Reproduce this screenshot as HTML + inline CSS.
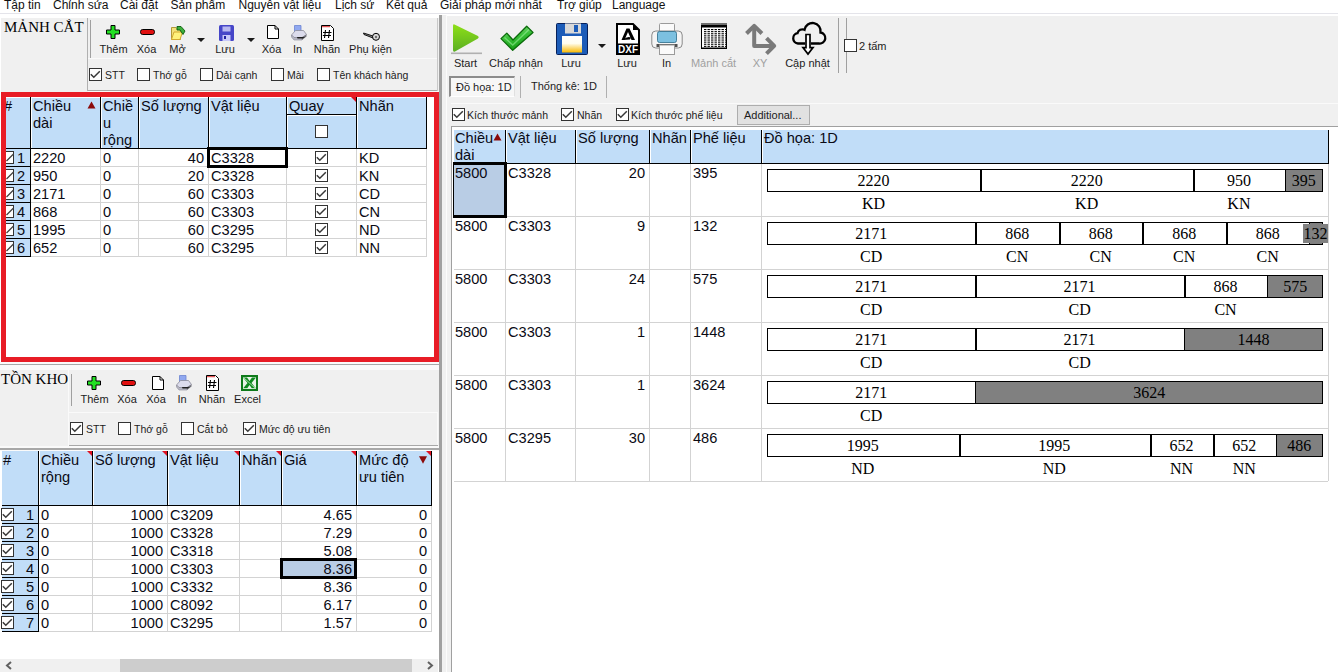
<!DOCTYPE html><html><head><meta charset="utf-8"><style>
*{box-sizing:border-box;margin:0;padding:0}
html,body{width:1338px;height:672px;overflow:hidden;background:#fff;position:relative;font-family:"Liberation Sans",sans-serif;color:#000}
.a{position:absolute}
.t{position:absolute;white-space:nowrap;line-height:1}
.menu{font-size:12px;color:#111}
.serif{font-family:"Liberation Serif",serif}
.lbl{position:absolute;white-space:nowrap;line-height:1;font-size:11px;color:#1c1c1c;text-align:center}
.cb{position:absolute;width:13px;height:13px;border:1px solid #333;background:#fff}
.ck{position:absolute;left:0;top:0}
.g{position:absolute;white-space:nowrap;line-height:1;font-size:14.6px;color:#0a0a14}
.gr{position:absolute;white-space:nowrap;line-height:1;font-size:14.6px;text-align:right;color:#0a0a14}
.b{position:absolute;white-space:nowrap;line-height:1;font-family:"Liberation Serif",serif;font-size:16px;text-align:center;color:#000}
</style></head><body>
<div class="t menu" style="left:4px;top:-1.5px;">Tập tin</div>
<div class="t menu" style="left:53px;top:-1.5px;">Chỉnh sửa</div>
<div class="t menu" style="left:120px;top:-1.5px;">Cài đặt</div>
<div class="t menu" style="left:170.5px;top:-1.5px;">Sản phẩm</div>
<div class="t menu" style="left:238.5px;top:-1.5px;">Nguyên vật liệu</div>
<div class="t menu" style="left:335px;top:-1.5px;">Lịch sử</div>
<div class="t menu" style="left:386px;top:-1.5px;">Kết quả</div>
<div class="t menu" style="left:440px;top:-1.5px;">Giải pháp mới nhất</div>
<div class="t menu" style="left:557px;top:-1.5px;">Trợ giúp</div>
<div class="t menu" style="left:612px;top:-1.5px;">Language</div>
<div class="a" style="left:0px;top:13px;width:1338px;height:1px;background:#e4e4ea"></div>
<div class="a" style="left:439px;top:15px;width:3px;height:657px;background:#a0a0a0"></div>
<div class="a" style="left:442px;top:15px;width:5px;height:657px;background:#f0f0f0"></div>
<div class="a" style="left:446px;top:15px;width:1px;height:657px;background:#fbfbfb"></div>
<div class="a" style="left:1px;top:18px;width:438px;height:74px;background:#f0f0f0"></div>
<div class="a" style="left:87px;top:18px;width:1px;height:73px;background:#b0b0b0"></div>
<div class="t serif" style="left:4px;top:20px;font-size:15px">MẢNH CẮT</div>
<div class="a" style="left:88px;top:58px;width:350px;height:1px;background:#fafafa"></div>
<div class="a" style="left:88px;top:90px;width:350px;height:1px;background:#a8a8a8"></div>
<div class="a" style="left:88px;top:91px;width:351px;height:1px;background:#fafafa"></div>
<div class="a" style="left:437px;top:18px;width:1px;height:73px;background:#c8c8c8"></div>
<div class="a" style="left:90px;top:20px;width:1px;height:38px;background:#a0a0a0"></div>
<svg class="a" style="left:106px;top:25px" width="14" height="14" viewBox="0 0 14 14"><path d="M5 0.5 H9 V5 H13.5 V9 H9 V13.5 H5 V9 H0.5 V5 H5Z" fill="#22e022" stroke="#000" stroke-width="1" stroke-linejoin="round"/></svg>
<div class="lbl" style="left:63.5px;top:44px;width:100px;color:#1c1c1c;font-size:11px">Thêm</div>
<svg class="a" style="left:140px;top:29px" width="15" height="6" viewBox="0 0 15 6"><rect x="0.5" y="0.5" width="14" height="5" rx="2.2" fill="#e01010" stroke="#000" stroke-width="1"/></svg>
<div class="lbl" style="left:96.5px;top:44px;width:100px;color:#1c1c1c;font-size:11px">Xóa</div>
<svg class="a" style="left:170px;top:25px" width="16" height="16" viewBox="0 0 16 16"><path d="M1.5 2.5 H6 L7 3.5 H10.5 V14.5 H1.5Z" fill="#f4e27a" stroke="#b09838" stroke-width="1"/><path d="M1.5 14.5 L4 7 H12.5 L10 14.5Z" fill="#fff27a" stroke="#d4aa30" stroke-width="1"/><path d="M7 1.5 H11 L15 6 L13 9.5 L10 5 H7Z" fill="#3cb03c" stroke="#0c5a0c" stroke-width="0.9"/></svg>
<div class="lbl" style="left:127.5px;top:44px;width:100px;color:#1c1c1c;font-size:11px">Mở</div>
<svg class="a" style="left:197px;top:38px" width="8" height="4" viewBox="0 0 8 4"><path d="M0 0 H8 L4 4Z" fill="#1a1a1a"/></svg>
<svg class="a" style="left:219px;top:25px" width="15" height="16" viewBox="0 0 15 16"><rect x="0" y="0" width="15" height="16" rx="1.5" fill="#4646c8"/><rect x="3.5" y="1.5" width="8" height="5" fill="#b8b8f0"/><rect x="3.5" y="10" width="8" height="6" fill="#c8c8f8"/><rect x="5" y="11" width="2" height="3" fill="#2020a0"/></svg>
<div class="lbl" style="left:175px;top:44px;width:100px;color:#1c1c1c;font-size:11px">Lưu</div>
<svg class="a" style="left:247px;top:38px" width="8" height="4" viewBox="0 0 8 4"><path d="M0 0 H8 L4 4Z" fill="#1a1a1a"/></svg>
<svg class="a" style="left:267px;top:25px" width="12" height="14" viewBox="0 0 12 14"><path d="M0.5 0.5 H8 L11.5 4 V13.5 H0.5Z" fill="#fff" stroke="#000" stroke-width="1"/><path d="M8 0.5 V4 H11.5" fill="none" stroke="#000" stroke-width="1"/></svg>
<div class="lbl" style="left:221.5px;top:44px;width:100px;color:#1c1c1c;font-size:11px">Xóa</div>
<svg class="a" style="left:291px;top:25px" width="16" height="16" viewBox="0 0 16 16"><path d="M3.5 0.5 H10 V7 H3.5Z" fill="#90a8f0" stroke="#6c84d0" stroke-width="0.8"/><path d="M0.5 10 L4.5 5.5 H12.5 L15.5 9.5 L11 12.5 H3Z" fill="#dcdcec" stroke="#8a8a98" stroke-width="0.8"/><path d="M0.5 10 L3 12.5 H11 L11 15 H3 L0.5 12Z" fill="#b8b8c4" stroke="#8a8a98" stroke-width="0.6"/><path d="M11 12.5 L15.5 9.5 V11.5 L11 15Z" fill="#707078"/><path d="M6 12 H14 L11.5 13.6 H6.5Z" fill="#202020"/></svg>
<div class="lbl" style="left:247.5px;top:44px;width:100px;color:#1c1c1c;font-size:11px">In</div>
<svg class="a" style="left:321px;top:25px" width="13" height="16" viewBox="0 0 13 16"><path d="M0.5 0.5 H9.5 L12.5 3.5 V15.5 H0.5Z" fill="#fff" stroke="#000" stroke-width="1"/><rect x="1" y="1.2" width="8" height="1" fill="#e03030"/><path d="M4.5 5 L3.5 13 M8.5 5 L7.5 13 M2 7.5 H10.5 M1.8 10.5 H10" stroke="#000" stroke-width="1.1"/></svg>
<div class="lbl" style="left:277px;top:44px;width:100px;color:#1c1c1c;font-size:11px">Nhãn</div>
<svg class="a" style="left:363px;top:32px" width="17" height="9" viewBox="0 0 17 9"><path d="M0.5 1 L10 4 L10 6 L1 2.5Z" fill="#909090" stroke="#000" stroke-width="0.9"/><circle cx="13" cy="4.8" r="3.5" fill="#d8d8d8" stroke="#000" stroke-width="1"/><circle cx="13" cy="5" r="1.2" fill="#707070"/></svg>
<div class="lbl" style="left:320.5px;top:44px;width:100px;color:#1c1c1c;font-size:11px">Phụ kiện</div>
<div class="cb" style="left:89px;top:68px;width:13px;height:13px"><svg class="ck" width="11" height="11" viewBox="0 0 11 11"><path d="M0.8 5.2 L3.8 8.2 L9.8 2.2" fill="none" stroke="#383838" stroke-width="1.5"/></svg></div>
<div class="t" style="left:105px;top:70px;font-size:10.5px;color:#1c1c1c">STT</div>
<div class="cb" style="left:137px;top:68px;width:13px;height:13px"></div>
<div class="t" style="left:153px;top:70px;font-size:10.5px;color:#1c1c1c">Thớ gỗ</div>
<div class="cb" style="left:200px;top:68px;width:13px;height:13px"></div>
<div class="t" style="left:216px;top:70px;font-size:10.5px;color:#1c1c1c">Dải cạnh</div>
<div class="cb" style="left:271px;top:68px;width:13px;height:13px"></div>
<div class="t" style="left:287px;top:70px;font-size:10.5px;color:#1c1c1c">Mài</div>
<div class="cb" style="left:317px;top:68px;width:13px;height:13px"></div>
<div class="t" style="left:333px;top:70px;font-size:10.5px;color:#1c1c1c">Tên khách hàng</div>

<div class="a" style="left:1px;top:92px;width:438px;height:270px;background:#fff"></div>
<div class="a" style="left:6px;top:97px;width:428px;height:1px;background:#fff"></div>
<div class="a" style="left:6px;top:98px;width:420px;height:50px;background:#c1ddf8"></div>
<div class="a" style="left:30px;top:97px;width:1px;height:52px;background:#000"></div>
<div class="a" style="left:31px;top:97px;width:1px;height:51px;background:#fff"></div>
<div class="a" style="left:100px;top:97px;width:1px;height:52px;background:#000"></div>
<div class="a" style="left:101px;top:97px;width:1px;height:51px;background:#fff"></div>
<div class="a" style="left:138px;top:97px;width:1px;height:52px;background:#000"></div>
<div class="a" style="left:139px;top:97px;width:1px;height:51px;background:#fff"></div>
<div class="a" style="left:208px;top:97px;width:1px;height:52px;background:#000"></div>
<div class="a" style="left:209px;top:97px;width:1px;height:51px;background:#fff"></div>
<div class="a" style="left:286px;top:97px;width:1px;height:52px;background:#000"></div>
<div class="a" style="left:287px;top:97px;width:1px;height:51px;background:#fff"></div>
<div class="a" style="left:356px;top:97px;width:1px;height:52px;background:#000"></div>
<div class="a" style="left:357px;top:97px;width:1px;height:51px;background:#fff"></div>
<div class="a" style="left:426px;top:97px;width:1px;height:52px;background:#000"></div>
<div class="a" style="left:6px;top:148px;width:420px;height:1px;background:#000"></div>
<div class="a" style="left:287px;top:114px;width:69px;height:1px;background:#000"></div>
<div class="a" style="left:287px;top:115px;width:69px;height:1px;background:#fff"></div>
<div class="g" style="left:4px;top:99px;">#</div>
<div class="g" style="left:33px;top:99px;">Chiều</div>
<div class="g" style="left:33px;top:116px;">dài</div>
<div class="g" style="left:103px;top:99px;">Chiề</div>
<div class="g" style="left:103px;top:116px;">u</div>
<div class="g" style="left:103px;top:133px;">rộng</div>
<div class="g" style="left:141px;top:99px;">Số lượng</div>
<div class="g" style="left:211px;top:99px;">Vật liệu</div>
<div class="g" style="left:289px;top:99px;">Quay</div>
<div class="g" style="left:359px;top:99px;">Nhãn</div>
<svg class="a" style="left:87px;top:101px" width="9" height="8" viewBox="0 0 9 8"><path d="M4.5 0.5 L8.5 7.5 L0.5 7.5Z" fill="#8b0b0b"/></svg>
<div class="cb" style="left:315px;top:125px;width:13px;height:13px"></div>
<div class="a" style="left:351px;top:97px;width:0;height:0;border-top:5px solid #e01020;border-left:5px solid transparent"></div>
<div class="a" style="left:6px;top:149px;width:24px;height:17px;background:#c1ddf8"></div>
<div class="a" style="left:6px;top:166px;width:24px;height:1px;background:#000"></div>
<div class="a" style="left:30px;top:166px;width:396px;height:1px;background:#d3d3d3"></div>
<div class="a" style="left:1px;top:151px;width:13px;height:13px;border:1px solid #333;background:#fff"></div>
<svg class="a" style="left:6px;top:153px" width="8" height="9" viewBox="0 0 8 9"><path d="M0.5 8 L7.5 1" stroke="#404040" stroke-width="1.3"/></svg>
<div class="gr" style="left:0px;top:151px;width:25px">1</div>
<div class="g" style="left:33px;top:151px;">2220</div>
<div class="g" style="left:103px;top:151px;">0</div>
<div class="gr" style="left:138px;top:151px;width:66px">40</div>
<div class="g" style="left:211px;top:151px;">C3328</div>
<div class="g" style="left:359px;top:151px;">KD</div>
<div class="cb" style="left:315px;top:151px;width:13px;height:13px"><svg class="ck" width="11" height="11" viewBox="0 0 11 11"><path d="M0.8 5.2 L3.8 8.2 L9.8 2.2" fill="none" stroke="#383838" stroke-width="1.5"/></svg></div>
<div class="a" style="left:6px;top:167px;width:24px;height:17px;background:#c1ddf8"></div>
<div class="a" style="left:6px;top:184px;width:24px;height:1px;background:#000"></div>
<div class="a" style="left:30px;top:184px;width:396px;height:1px;background:#d3d3d3"></div>
<div class="a" style="left:1px;top:169px;width:13px;height:13px;border:1px solid #333;background:#fff"></div>
<svg class="a" style="left:6px;top:171px" width="8" height="9" viewBox="0 0 8 9"><path d="M0.5 8 L7.5 1" stroke="#404040" stroke-width="1.3"/></svg>
<div class="gr" style="left:0px;top:169px;width:25px">2</div>
<div class="g" style="left:33px;top:169px;">950</div>
<div class="g" style="left:103px;top:169px;">0</div>
<div class="gr" style="left:138px;top:169px;width:66px">20</div>
<div class="g" style="left:211px;top:169px;">C3328</div>
<div class="g" style="left:359px;top:169px;">KN</div>
<div class="cb" style="left:315px;top:169px;width:13px;height:13px"><svg class="ck" width="11" height="11" viewBox="0 0 11 11"><path d="M0.8 5.2 L3.8 8.2 L9.8 2.2" fill="none" stroke="#383838" stroke-width="1.5"/></svg></div>
<div class="a" style="left:6px;top:185px;width:24px;height:17px;background:#c1ddf8"></div>
<div class="a" style="left:6px;top:202px;width:24px;height:1px;background:#000"></div>
<div class="a" style="left:30px;top:202px;width:396px;height:1px;background:#d3d3d3"></div>
<div class="a" style="left:1px;top:187px;width:13px;height:13px;border:1px solid #333;background:#fff"></div>
<svg class="a" style="left:6px;top:189px" width="8" height="9" viewBox="0 0 8 9"><path d="M0.5 8 L7.5 1" stroke="#404040" stroke-width="1.3"/></svg>
<div class="gr" style="left:0px;top:187px;width:25px">3</div>
<div class="g" style="left:33px;top:187px;">2171</div>
<div class="g" style="left:103px;top:187px;">0</div>
<div class="gr" style="left:138px;top:187px;width:66px">60</div>
<div class="g" style="left:211px;top:187px;">C3303</div>
<div class="g" style="left:359px;top:187px;">CD</div>
<div class="cb" style="left:315px;top:187px;width:13px;height:13px"><svg class="ck" width="11" height="11" viewBox="0 0 11 11"><path d="M0.8 5.2 L3.8 8.2 L9.8 2.2" fill="none" stroke="#383838" stroke-width="1.5"/></svg></div>
<div class="a" style="left:6px;top:203px;width:24px;height:17px;background:#c1ddf8"></div>
<div class="a" style="left:6px;top:220px;width:24px;height:1px;background:#000"></div>
<div class="a" style="left:30px;top:220px;width:396px;height:1px;background:#d3d3d3"></div>
<div class="a" style="left:1px;top:205px;width:13px;height:13px;border:1px solid #333;background:#fff"></div>
<svg class="a" style="left:6px;top:207px" width="8" height="9" viewBox="0 0 8 9"><path d="M0.5 8 L7.5 1" stroke="#404040" stroke-width="1.3"/></svg>
<div class="gr" style="left:0px;top:205px;width:25px">4</div>
<div class="g" style="left:33px;top:205px;">868</div>
<div class="g" style="left:103px;top:205px;">0</div>
<div class="gr" style="left:138px;top:205px;width:66px">60</div>
<div class="g" style="left:211px;top:205px;">C3303</div>
<div class="g" style="left:359px;top:205px;">CN</div>
<div class="cb" style="left:315px;top:205px;width:13px;height:13px"><svg class="ck" width="11" height="11" viewBox="0 0 11 11"><path d="M0.8 5.2 L3.8 8.2 L9.8 2.2" fill="none" stroke="#383838" stroke-width="1.5"/></svg></div>
<div class="a" style="left:6px;top:221px;width:24px;height:17px;background:#c1ddf8"></div>
<div class="a" style="left:6px;top:238px;width:24px;height:1px;background:#000"></div>
<div class="a" style="left:30px;top:238px;width:396px;height:1px;background:#d3d3d3"></div>
<div class="a" style="left:1px;top:223px;width:13px;height:13px;border:1px solid #333;background:#fff"></div>
<svg class="a" style="left:6px;top:225px" width="8" height="9" viewBox="0 0 8 9"><path d="M0.5 8 L7.5 1" stroke="#404040" stroke-width="1.3"/></svg>
<div class="gr" style="left:0px;top:223px;width:25px">5</div>
<div class="g" style="left:33px;top:223px;">1995</div>
<div class="g" style="left:103px;top:223px;">0</div>
<div class="gr" style="left:138px;top:223px;width:66px">60</div>
<div class="g" style="left:211px;top:223px;">C3295</div>
<div class="g" style="left:359px;top:223px;">ND</div>
<div class="cb" style="left:315px;top:223px;width:13px;height:13px"><svg class="ck" width="11" height="11" viewBox="0 0 11 11"><path d="M0.8 5.2 L3.8 8.2 L9.8 2.2" fill="none" stroke="#383838" stroke-width="1.5"/></svg></div>
<div class="a" style="left:6px;top:239px;width:24px;height:17px;background:#c1ddf8"></div>
<div class="a" style="left:6px;top:256px;width:24px;height:1px;background:#000"></div>
<div class="a" style="left:30px;top:256px;width:396px;height:1px;background:#d3d3d3"></div>
<div class="a" style="left:1px;top:241px;width:13px;height:13px;border:1px solid #333;background:#fff"></div>
<svg class="a" style="left:6px;top:243px" width="8" height="9" viewBox="0 0 8 9"><path d="M0.5 8 L7.5 1" stroke="#404040" stroke-width="1.3"/></svg>
<div class="gr" style="left:0px;top:241px;width:25px">6</div>
<div class="g" style="left:33px;top:241px;">652</div>
<div class="g" style="left:103px;top:241px;">0</div>
<div class="gr" style="left:138px;top:241px;width:66px">60</div>
<div class="g" style="left:211px;top:241px;">C3295</div>
<div class="g" style="left:359px;top:241px;">NN</div>
<div class="cb" style="left:315px;top:241px;width:13px;height:13px"><svg class="ck" width="11" height="11" viewBox="0 0 11 11"><path d="M0.8 5.2 L3.8 8.2 L9.8 2.2" fill="none" stroke="#383838" stroke-width="1.5"/></svg></div>
<div class="a" style="left:30px;top:149px;width:1px;height:108px;background:#000"></div>
<div class="a" style="left:100px;top:149px;width:1px;height:108px;background:#d3d3d3"></div>
<div class="a" style="left:138px;top:149px;width:1px;height:108px;background:#d3d3d3"></div>
<div class="a" style="left:208px;top:149px;width:1px;height:108px;background:#d3d3d3"></div>
<div class="a" style="left:286px;top:149px;width:1px;height:108px;background:#d3d3d3"></div>
<div class="a" style="left:356px;top:149px;width:1px;height:108px;background:#d3d3d3"></div>
<div class="a" style="left:426px;top:149px;width:1px;height:108px;background:#d3d3d3"></div>
<div class="a" style="left:207px;top:147px;width:81px;height:21px;border:3px solid #000"></div>
<div class="a" style="left:1px;top:92px;width:438px;height:270px;border:5px solid #e81c26"></div>
<div class="a" style="left:0px;top:362px;width:439px;height:2px;background:#fafafa"></div>
<div class="a" style="left:0px;top:364px;width:439px;height:1px;background:#a8a8a8"></div>
<div class="a" style="left:0px;top:365px;width:439px;height:5px;background:#fafafa"></div>
<div class="a" style="left:0px;top:370px;width:439px;height:78px;background:#f0f0f0"></div>
<div class="t serif" style="left:1px;top:372px;font-size:15px">TỒN KHO</div>
<div class="a" style="left:68px;top:370px;width:1px;height:76px;background:#fafafa"></div>
<div class="a" style="left:69px;top:412px;width:368px;height:1px;background:#fafafa"></div>
<div class="a" style="left:437px;top:412px;width:1px;height:33px;background:#fafafa"></div>
<div class="a" style="left:71px;top:374px;width:1px;height:32px;background:#a0a0a0"></div>
<div class="a" style="left:69px;top:445px;width:369px;height:1px;background:#a8a8a8"></div>
<div class="a" style="left:0px;top:446px;width:439px;height:2px;background:#fafafa"></div>
<div class="a" style="left:0px;top:448px;width:439px;height:2px;background:#a8a8a8"></div>
<div class="a" style="left:0px;top:450px;width:439px;height:1px;background:#fafafa"></div>

<svg class="a" style="left:87px;top:376px" width="14" height="14" viewBox="0 0 14 14"><path d="M5 0.5 H9 V5 H13.5 V9 H9 V13.5 H5 V9 H0.5 V5 H5Z" fill="#22e022" stroke="#000" stroke-width="1" stroke-linejoin="round"/></svg>
<div class="lbl" style="left:44.5px;top:394px;width:100px;color:#1c1c1c;font-size:11px">Thêm</div>
<svg class="a" style="left:121px;top:380px" width="15" height="6" viewBox="0 0 15 6"><rect x="0.5" y="0.5" width="14" height="5" rx="2.2" fill="#e01010" stroke="#000" stroke-width="1"/></svg>
<div class="lbl" style="left:77px;top:394px;width:100px;color:#1c1c1c;font-size:11px">Xóa</div>
<svg class="a" style="left:152px;top:376px" width="12" height="14" viewBox="0 0 12 14"><path d="M0.5 0.5 H8 L11.5 4 V13.5 H0.5Z" fill="#fff" stroke="#000" stroke-width="1"/><path d="M8 0.5 V4 H11.5" fill="none" stroke="#000" stroke-width="1"/></svg>
<div class="lbl" style="left:106px;top:394px;width:100px;color:#1c1c1c;font-size:11px">Xóa</div>
<svg class="a" style="left:176px;top:375px" width="16" height="16" viewBox="0 0 16 16"><path d="M3.5 0.5 H10 V7 H3.5Z" fill="#90a8f0" stroke="#6c84d0" stroke-width="0.8"/><path d="M0.5 10 L4.5 5.5 H12.5 L15.5 9.5 L11 12.5 H3Z" fill="#dcdcec" stroke="#8a8a98" stroke-width="0.8"/><path d="M0.5 10 L3 12.5 H11 L11 15 H3 L0.5 12Z" fill="#b8b8c4" stroke="#8a8a98" stroke-width="0.6"/><path d="M11 12.5 L15.5 9.5 V11.5 L11 15Z" fill="#707078"/><path d="M6 12 H14 L11.5 13.6 H6.5Z" fill="#202020"/></svg>
<div class="lbl" style="left:132px;top:394px;width:100px;color:#1c1c1c;font-size:11px">In</div>
<svg class="a" style="left:206px;top:375px" width="13" height="16" viewBox="0 0 13 16"><path d="M0.5 0.5 H9.5 L12.5 3.5 V15.5 H0.5Z" fill="#fff" stroke="#000" stroke-width="1"/><rect x="1" y="1.2" width="8" height="1" fill="#e03030"/><path d="M4.5 5 L3.5 13 M8.5 5 L7.5 13 M2 7.5 H10.5 M1.8 10.5 H10" stroke="#000" stroke-width="1.1"/></svg>
<div class="lbl" style="left:162px;top:394px;width:100px;color:#1c1c1c;font-size:11px">Nhãn</div>
<svg class="a" style="left:241px;top:375px" width="17" height="16" viewBox="0 0 17 16"><rect x="1" y="1" width="15" height="14" fill="#e8f4e8" stroke="#0e7a1a" stroke-width="2"/><path d="M2 2.5 L6 2.5 L8.5 6 L11 2.5 H15 L10.5 8 L15 13.5 H11 L8.5 10 L6 13.5 H2 L6.5 8Z" fill="#0e8a1e"/><path d="M3 3 L14 13" stroke="#c8f0c8" stroke-width="0.8"/><path d="M2 13.5 H15" stroke="#d8f0d8" stroke-width="0.7"/></svg>
<div class="lbl" style="left:197.5px;top:394px;width:100px;color:#1c1c1c;font-size:11px">Excel</div>
<div class="cb" style="left:70px;top:422px;width:13px;height:13px"><svg class="ck" width="11" height="11" viewBox="0 0 11 11"><path d="M0.8 5.2 L3.8 8.2 L9.8 2.2" fill="none" stroke="#383838" stroke-width="1.5"/></svg></div>
<div class="t" style="left:86px;top:424px;font-size:10.5px;color:#1c1c1c">STT</div>
<div class="cb" style="left:118px;top:422px;width:13px;height:13px"></div>
<div class="t" style="left:134px;top:424px;font-size:10.5px;color:#1c1c1c">Thớ gỗ</div>
<div class="cb" style="left:181px;top:422px;width:13px;height:13px"></div>
<div class="t" style="left:197px;top:424px;font-size:10.5px;color:#1c1c1c">Cắt bỏ</div>
<div class="cb" style="left:243px;top:422px;width:13px;height:13px"><svg class="ck" width="11" height="11" viewBox="0 0 11 11"><path d="M0.8 5.2 L3.8 8.2 L9.8 2.2" fill="none" stroke="#383838" stroke-width="1.5"/></svg></div>
<div class="t" style="left:259px;top:424px;font-size:10.5px;color:#1c1c1c">Mức độ ưu tiên</div>

<div class="a" style="left:2px;top:451px;width:429px;height:54px;background:#c1ddf8"></div>
<div class="a" style="left:38px;top:451px;width:1px;height:55px;background:#000"></div>
<div class="a" style="left:39px;top:451px;width:1px;height:54px;background:#fff"></div>
<div class="a" style="left:92px;top:451px;width:1px;height:55px;background:#000"></div>
<div class="a" style="left:93px;top:451px;width:1px;height:54px;background:#fff"></div>
<div class="a" style="left:167px;top:451px;width:1px;height:55px;background:#000"></div>
<div class="a" style="left:168px;top:451px;width:1px;height:54px;background:#fff"></div>
<div class="a" style="left:239px;top:451px;width:1px;height:55px;background:#000"></div>
<div class="a" style="left:240px;top:451px;width:1px;height:54px;background:#fff"></div>
<div class="a" style="left:281px;top:451px;width:1px;height:55px;background:#000"></div>
<div class="a" style="left:282px;top:451px;width:1px;height:54px;background:#fff"></div>
<div class="a" style="left:356px;top:451px;width:1px;height:55px;background:#000"></div>
<div class="a" style="left:357px;top:451px;width:1px;height:54px;background:#fff"></div>
<div class="a" style="left:431px;top:451px;width:1px;height:55px;background:#000"></div>
<div class="a" style="left:2px;top:505px;width:429px;height:1px;background:#000"></div>
<div class="g" style="left:3px;top:453px;">#</div>
<div class="g" style="left:41px;top:453px;">Chiều</div>
<div class="g" style="left:41px;top:470px;">rộng</div>
<div class="g" style="left:95px;top:453px;">Số lượng</div>
<div class="g" style="left:170px;top:453px;">Vật liệu</div>
<div class="g" style="left:242px;top:453px;">Nhãn</div>
<div class="g" style="left:284px;top:453px;">Giá</div>
<div class="g" style="left:359px;top:453px;">Mức độ</div>
<div class="g" style="left:359px;top:470px;">ưu tiên</div>
<div class="a" style="left:87px;top:451px;width:0;height:0;border-top:5px solid #e01020;border-left:5px solid transparent"></div>
<div class="a" style="left:162px;top:451px;width:0;height:0;border-top:5px solid #e01020;border-left:5px solid transparent"></div>
<div class="a" style="left:234px;top:451px;width:0;height:0;border-top:5px solid #e01020;border-left:5px solid transparent"></div>
<div class="a" style="left:276px;top:451px;width:0;height:0;border-top:5px solid #e01020;border-left:5px solid transparent"></div>
<div class="a" style="left:351px;top:451px;width:0;height:0;border-top:5px solid #e01020;border-left:5px solid transparent"></div>
<div class="a" style="left:426px;top:451px;width:0;height:0;border-top:5px solid #e01020;border-left:5px solid transparent"></div>
<svg class="a" style="left:419px;top:456px" width="8" height="8" viewBox="0 0 8 8"><path d="M0 0.3 L8 0.3 L4 7.8Z" fill="#8b0b0b"/></svg>
<div class="a" style="left:2px;top:506px;width:36px;height:17px;background:#c1ddf8"></div>
<div class="a" style="left:2px;top:523px;width:36px;height:1px;background:#000"></div>
<div class="a" style="left:38px;top:523px;width:393px;height:1px;background:#d3d3d3"></div>
<div class="cb" style="left:1px;top:508px;width:13px;height:13px"><svg class="ck" width="11" height="11" viewBox="0 0 11 11"><path d="M0.8 5.2 L3.8 8.2 L9.8 2.2" fill="none" stroke="#383838" stroke-width="1.5"/></svg></div>
<div class="gr" style="left:0px;top:508px;width:34px">1</div>
<div class="g" style="left:41px;top:508px;">0</div>
<div class="gr" style="left:92px;top:508px;width:71px">1000</div>
<div class="g" style="left:170px;top:508px;">C3209</div>
<div class="gr" style="left:281px;top:508px;width:71px">4.65</div>
<div class="gr" style="left:356px;top:508px;width:71px">0</div>
<div class="a" style="left:2px;top:524px;width:36px;height:17px;background:#c1ddf8"></div>
<div class="a" style="left:2px;top:541px;width:36px;height:1px;background:#000"></div>
<div class="a" style="left:38px;top:541px;width:393px;height:1px;background:#d3d3d3"></div>
<div class="cb" style="left:1px;top:526px;width:13px;height:13px"><svg class="ck" width="11" height="11" viewBox="0 0 11 11"><path d="M0.8 5.2 L3.8 8.2 L9.8 2.2" fill="none" stroke="#383838" stroke-width="1.5"/></svg></div>
<div class="gr" style="left:0px;top:526px;width:34px">2</div>
<div class="g" style="left:41px;top:526px;">0</div>
<div class="gr" style="left:92px;top:526px;width:71px">1000</div>
<div class="g" style="left:170px;top:526px;">C3328</div>
<div class="gr" style="left:281px;top:526px;width:71px">7.29</div>
<div class="gr" style="left:356px;top:526px;width:71px">0</div>
<div class="a" style="left:2px;top:542px;width:36px;height:17px;background:#c1ddf8"></div>
<div class="a" style="left:2px;top:559px;width:36px;height:1px;background:#000"></div>
<div class="a" style="left:38px;top:559px;width:393px;height:1px;background:#d3d3d3"></div>
<div class="cb" style="left:1px;top:544px;width:13px;height:13px"><svg class="ck" width="11" height="11" viewBox="0 0 11 11"><path d="M0.8 5.2 L3.8 8.2 L9.8 2.2" fill="none" stroke="#383838" stroke-width="1.5"/></svg></div>
<div class="gr" style="left:0px;top:544px;width:34px">3</div>
<div class="g" style="left:41px;top:544px;">0</div>
<div class="gr" style="left:92px;top:544px;width:71px">1000</div>
<div class="g" style="left:170px;top:544px;">C3318</div>
<div class="gr" style="left:281px;top:544px;width:71px">5.08</div>
<div class="gr" style="left:356px;top:544px;width:71px">0</div>
<div class="a" style="left:2px;top:560px;width:36px;height:17px;background:#c1ddf8"></div>
<div class="a" style="left:2px;top:577px;width:36px;height:1px;background:#000"></div>
<div class="a" style="left:38px;top:577px;width:393px;height:1px;background:#d3d3d3"></div>
<div class="cb" style="left:1px;top:562px;width:13px;height:13px"><svg class="ck" width="11" height="11" viewBox="0 0 11 11"><path d="M0.8 5.2 L3.8 8.2 L9.8 2.2" fill="none" stroke="#383838" stroke-width="1.5"/></svg></div>
<div class="a" style="left:281px;top:559px;width:76px;height:20px;background:#b9cde5"></div>
<div class="gr" style="left:0px;top:562px;width:34px">4</div>
<div class="g" style="left:41px;top:562px;">0</div>
<div class="gr" style="left:92px;top:562px;width:71px">1000</div>
<div class="g" style="left:170px;top:562px;">C3303</div>
<div class="gr" style="left:281px;top:562px;width:71px">8.36</div>
<div class="gr" style="left:356px;top:562px;width:71px">0</div>
<div class="a" style="left:2px;top:578px;width:36px;height:17px;background:#c1ddf8"></div>
<div class="a" style="left:2px;top:595px;width:36px;height:1px;background:#000"></div>
<div class="a" style="left:38px;top:595px;width:393px;height:1px;background:#d3d3d3"></div>
<div class="cb" style="left:1px;top:580px;width:13px;height:13px"><svg class="ck" width="11" height="11" viewBox="0 0 11 11"><path d="M0.8 5.2 L3.8 8.2 L9.8 2.2" fill="none" stroke="#383838" stroke-width="1.5"/></svg></div>
<div class="gr" style="left:0px;top:580px;width:34px">5</div>
<div class="g" style="left:41px;top:580px;">0</div>
<div class="gr" style="left:92px;top:580px;width:71px">1000</div>
<div class="g" style="left:170px;top:580px;">C3332</div>
<div class="gr" style="left:281px;top:580px;width:71px">8.36</div>
<div class="gr" style="left:356px;top:580px;width:71px">0</div>
<div class="a" style="left:2px;top:596px;width:36px;height:17px;background:#c1ddf8"></div>
<div class="a" style="left:2px;top:613px;width:36px;height:1px;background:#000"></div>
<div class="a" style="left:38px;top:613px;width:393px;height:1px;background:#d3d3d3"></div>
<div class="cb" style="left:1px;top:598px;width:13px;height:13px"><svg class="ck" width="11" height="11" viewBox="0 0 11 11"><path d="M0.8 5.2 L3.8 8.2 L9.8 2.2" fill="none" stroke="#383838" stroke-width="1.5"/></svg></div>
<div class="gr" style="left:0px;top:598px;width:34px">6</div>
<div class="g" style="left:41px;top:598px;">0</div>
<div class="gr" style="left:92px;top:598px;width:71px">1000</div>
<div class="g" style="left:170px;top:598px;">C8092</div>
<div class="gr" style="left:281px;top:598px;width:71px">6.17</div>
<div class="gr" style="left:356px;top:598px;width:71px">0</div>
<div class="a" style="left:2px;top:614px;width:36px;height:17px;background:#c1ddf8"></div>
<div class="a" style="left:2px;top:631px;width:36px;height:1px;background:#000"></div>
<div class="a" style="left:38px;top:631px;width:393px;height:1px;background:#d3d3d3"></div>
<div class="cb" style="left:1px;top:616px;width:13px;height:13px"><svg class="ck" width="11" height="11" viewBox="0 0 11 11"><path d="M0.8 5.2 L3.8 8.2 L9.8 2.2" fill="none" stroke="#383838" stroke-width="1.5"/></svg></div>
<div class="gr" style="left:0px;top:616px;width:34px">7</div>
<div class="g" style="left:41px;top:616px;">0</div>
<div class="gr" style="left:92px;top:616px;width:71px">1000</div>
<div class="g" style="left:170px;top:616px;">C3295</div>
<div class="gr" style="left:281px;top:616px;width:71px">1.57</div>
<div class="gr" style="left:356px;top:616px;width:71px">0</div>
<div class="a" style="left:38px;top:506px;width:1px;height:126px;background:#000"></div>
<div class="a" style="left:92px;top:506px;width:1px;height:126px;background:#d3d3d3"></div>
<div class="a" style="left:167px;top:506px;width:1px;height:126px;background:#d3d3d3"></div>
<div class="a" style="left:239px;top:506px;width:1px;height:126px;background:#d3d3d3"></div>
<div class="a" style="left:281px;top:506px;width:1px;height:126px;background:#d3d3d3"></div>
<div class="a" style="left:356px;top:506px;width:1px;height:126px;background:#d3d3d3"></div>
<div class="a" style="left:431px;top:506px;width:1px;height:126px;background:#d3d3d3"></div>
<div class="a" style="left:280px;top:558px;width:77px;height:21px;border:3px solid #000"></div>
<div class="a" style="left:0px;top:659px;width:438px;height:13px;background:#f0f0f0"></div>
<div class="a" style="left:120px;top:659px;width:292px;height:13px;background:#cdcdcd"></div>
<svg class="a" style="left:5px;top:661px" width="8" height="9" viewBox="0 0 8 9"><path d="M6 1 L2 4.5 L6 8" fill="none" stroke="#606060" stroke-width="2"/></svg>
<svg class="a" style="left:426px;top:661px" width="8" height="9" viewBox="0 0 8 9"><path d="M2 1 L6 4.5 L2 8" fill="none" stroke="#606060" stroke-width="2"/></svg>
<div class="a" style="left:447px;top:16px;width:891px;height:111px;background:#f0f0f0"></div>
<div class="a" style="left:447px;top:127px;width:4px;height:545px;background:#f0f0f0"></div>

<svg class="a" style="left:451px;top:22px" width="31" height="33" viewBox="0 0 31 33"><defs><linearGradient id="gs" x1="0" y1="0" x2="0" y2="1"><stop offset="0" stop-color="#8ee018"/><stop offset="1" stop-color="#5aae22"/></linearGradient></defs><path d="M3.5 2.5 Q2 1.5 2 4 V28 Q2 30.5 4 29.5 L27 16.5 Q28.5 15 27 14Z" fill="url(#gs)"/><rect x="0" y="30.5" width="31" height="1.6" fill="#b0b0b0"/></svg>
<div class="lbl" style="left:415.5px;top:58px;width:100px;color:#1c1c1c;font-size:11px">Start</div>
<svg class="a" style="left:500px;top:24px" width="35" height="28" viewBox="0 0 35 28"><defs><linearGradient id="gc" x1="0" y1="0" x2="0.3" y2="1"><stop offset="0" stop-color="#90e088"/><stop offset="0.5" stop-color="#38c038"/><stop offset="1" stop-color="#18a018"/></linearGradient></defs><path d="M1 14.6 L6.8 9.1 L13 16 L26.7 2.3 L33 8.4 L12.7 26.3 Z" fill="url(#gc)" stroke="#0a6a0a" stroke-width="1.3" stroke-linejoin="round"/><path d="M4.5 13.5 L12.8 21 L29 5.5" fill="none" stroke="#a0f0a0" stroke-width="1.5" opacity="0.55"/></svg>
<div class="lbl" style="left:466px;top:58px;width:100px;color:#1c1c1c;font-size:11px">Chấp nhận</div>
<svg class="a" style="left:556px;top:23px" width="32" height="32" viewBox="0 0 32 32"><defs><linearGradient id="gy" x1="0" y1="0" x2="0" y2="1"><stop offset="0" stop-color="#fff"/><stop offset="0.45" stop-color="#fffef0"/><stop offset="1" stop-color="#f8b800"/></linearGradient></defs><rect x="0.5" y="0.5" width="31" height="31" rx="1" fill="#1c5cb8" stroke="#06205a" stroke-width="1"/><rect x="9" y="0.5" width="16" height="10" fill="#d8d8d8"/><rect x="18" y="2" width="4" height="7" fill="#1c5cb8"/><rect x="6" y="13" width="20" height="16.5" fill="url(#gy)"/></svg>
<svg class="a" style="left:598px;top:44px" width="8" height="4" viewBox="0 0 8 4"><path d="M0 0 H8 L4 4Z" fill="#1a1a1a"/></svg>
<div class="lbl" style="left:521px;top:58px;width:100px;color:#1c1c1c;font-size:11px">Lưu</div>
<svg class="a" style="left:616px;top:23px" width="24" height="32" viewBox="0 0 24 32"><path d="M1 1 H17 L23 7 V31 H1Z" fill="#fff" stroke="#000" stroke-width="2"/><path d="M17 1 V7 H23Z" fill="#000"/><path d="M5.5 17 L10.5 5.5 H13.5 L19 17 H15.5 L12 9 L8.5 17Z" fill="#000"/><path d="M7 17 Q11 13 15 14.5 L14 16.5Z" fill="#000"/><rect x="0" y="20.5" width="24" height="11.5" fill="#000"/><text x="12" y="30.3" font-family="Liberation Sans" font-weight="bold" font-size="10" fill="#fff" text-anchor="middle">DXF</text></svg>
<div class="lbl" style="left:577px;top:58px;width:100px;color:#1c1c1c;font-size:11px">Lưu</div>
<svg class="a" style="left:651px;top:22px" width="32" height="33" viewBox="0 0 32 33"><rect x="8.5" y="1.5" width="15" height="9" rx="1" fill="#fafafa" stroke="#9a9a9a"/><rect x="0.8" y="9" width="30.4" height="17" rx="4" fill="#f4f4f4" stroke="#8a8a8a" stroke-width="1"/><rect x="6.5" y="9.5" width="19" height="11" rx="2" fill="#7cc0e0" stroke="#2a6a88" stroke-width="0.8"/><rect x="5.5" y="22" width="21" height="3" fill="#505050"/><rect x="8.5" y="23" width="15" height="9.5" fill="#fafafa" stroke="#9a9a9a"/></svg>
<div class="lbl" style="left:616.5px;top:58px;width:100px;color:#1c1c1c;font-size:11px">In</div>
<svg class="a" style="left:701px;top:23px" width="26" height="26" viewBox="0 0 26 26"><rect x="0.5" y="0.5" width="25" height="25" fill="#fff" stroke="#000" stroke-width="1"/><rect x="0" y="0" width="26" height="2" fill="#707070"/><rect x="0" y="2" width="26" height="2.5" fill="#000"/><rect x="3.0" y="6.0" width="2.4" height="1.1" fill="#000"/><rect x="6.5" y="6.0" width="2.4" height="1.1" fill="#000"/><rect x="10.0" y="6.0" width="2.4" height="1.1" fill="#000"/><rect x="13.5" y="6.0" width="2.4" height="1.1" fill="#000"/><rect x="17.0" y="6.0" width="2.4" height="1.1" fill="#000"/><rect x="20.5" y="6.0" width="2.4" height="1.1" fill="#000"/><rect x="24.0" y="6.0" width="2.4" height="1.1" fill="#000"/><rect x="3.0" y="8.1" width="2.4" height="1.1" fill="#000"/><rect x="6.5" y="8.1" width="2.4" height="1.1" fill="#000"/><rect x="10.0" y="8.1" width="2.4" height="1.1" fill="#000"/><rect x="13.5" y="8.1" width="2.4" height="1.1" fill="#000"/><rect x="17.0" y="8.1" width="2.4" height="1.1" fill="#000"/><rect x="20.5" y="8.1" width="2.4" height="1.1" fill="#000"/><rect x="24.0" y="8.1" width="2.4" height="1.1" fill="#000"/><rect x="3.0" y="10.2" width="2.4" height="1.1" fill="#000"/><rect x="6.5" y="10.2" width="2.4" height="1.1" fill="#000"/><rect x="10.0" y="10.2" width="2.4" height="1.1" fill="#000"/><rect x="13.5" y="10.2" width="2.4" height="1.1" fill="#000"/><rect x="17.0" y="10.2" width="2.4" height="1.1" fill="#000"/><rect x="20.5" y="10.2" width="2.4" height="1.1" fill="#000"/><rect x="24.0" y="10.2" width="2.4" height="1.1" fill="#000"/><rect x="3.0" y="12.3" width="2.4" height="1.1" fill="#000"/><rect x="6.5" y="12.3" width="2.4" height="1.1" fill="#000"/><rect x="10.0" y="12.3" width="2.4" height="1.1" fill="#000"/><rect x="13.5" y="12.3" width="2.4" height="1.1" fill="#000"/><rect x="17.0" y="12.3" width="2.4" height="1.1" fill="#000"/><rect x="20.5" y="12.3" width="2.4" height="1.1" fill="#000"/><rect x="24.0" y="12.3" width="2.4" height="1.1" fill="#000"/><rect x="3.0" y="14.4" width="2.4" height="1.1" fill="#000"/><rect x="6.5" y="14.4" width="2.4" height="1.1" fill="#000"/><rect x="10.0" y="14.4" width="2.4" height="1.1" fill="#000"/><rect x="13.5" y="14.4" width="2.4" height="1.1" fill="#000"/><rect x="17.0" y="14.4" width="2.4" height="1.1" fill="#000"/><rect x="20.5" y="14.4" width="2.4" height="1.1" fill="#000"/><rect x="24.0" y="14.4" width="2.4" height="1.1" fill="#000"/><rect x="3.0" y="16.5" width="2.4" height="1.1" fill="#000"/><rect x="6.5" y="16.5" width="2.4" height="1.1" fill="#000"/><rect x="10.0" y="16.5" width="2.4" height="1.1" fill="#000"/><rect x="13.5" y="16.5" width="2.4" height="1.1" fill="#000"/><rect x="17.0" y="16.5" width="2.4" height="1.1" fill="#000"/><rect x="20.5" y="16.5" width="2.4" height="1.1" fill="#000"/><rect x="24.0" y="16.5" width="2.4" height="1.1" fill="#000"/><rect x="3.0" y="18.6" width="2.4" height="1.1" fill="#000"/><rect x="6.5" y="18.6" width="2.4" height="1.1" fill="#000"/><rect x="10.0" y="18.6" width="2.4" height="1.1" fill="#000"/><rect x="13.5" y="18.6" width="2.4" height="1.1" fill="#000"/><rect x="17.0" y="18.6" width="2.4" height="1.1" fill="#000"/><rect x="20.5" y="18.6" width="2.4" height="1.1" fill="#000"/><rect x="24.0" y="18.6" width="2.4" height="1.1" fill="#000"/><rect x="3.0" y="20.7" width="2.4" height="1.1" fill="#000"/><rect x="6.5" y="20.7" width="2.4" height="1.1" fill="#000"/><rect x="10.0" y="20.7" width="2.4" height="1.1" fill="#000"/><rect x="13.5" y="20.7" width="2.4" height="1.1" fill="#000"/><rect x="17.0" y="20.7" width="2.4" height="1.1" fill="#000"/><rect x="20.5" y="20.7" width="2.4" height="1.1" fill="#000"/><rect x="24.0" y="20.7" width="2.4" height="1.1" fill="#000"/><rect x="3.0" y="22.8" width="2.4" height="1.1" fill="#000"/><rect x="6.5" y="22.8" width="2.4" height="1.1" fill="#000"/><rect x="10.0" y="22.8" width="2.4" height="1.1" fill="#000"/><rect x="13.5" y="22.8" width="2.4" height="1.1" fill="#000"/><rect x="17.0" y="22.8" width="2.4" height="1.1" fill="#000"/><rect x="20.5" y="22.8" width="2.4" height="1.1" fill="#000"/><rect x="24.0" y="22.8" width="2.4" height="1.1" fill="#000"/><rect x="0" y="24.5" width="26" height="1.5" fill="#000"/></svg>
<div class="lbl" style="left:663.5px;top:58px;width:100px;color:#a0a0a0;font-size:11px">Mảnh cắt</div>
<svg class="a" style="left:743px;top:22px" width="36" height="34" viewBox="0 0 36 34"><path d="M11.2 5 V23.9 H30" fill="none" stroke="#7a7a7a" stroke-width="4" stroke-linejoin="round"/><path d="M3.5 11.5 L11.2 3.8 L18.9 11.5" fill="none" stroke="#7a7a7a" stroke-width="4" stroke-linejoin="round"/><path d="M23.5 16.2 L31.2 23.9 L23.5 31.6" fill="none" stroke="#7a7a7a" stroke-width="4" stroke-linejoin="round"/></svg>
<div class="lbl" style="left:710px;top:58px;width:100px;color:#a0a0a0;font-size:11px">XY</div>
<svg class="a" style="left:790px;top:21px" width="37" height="35" viewBox="0 0 37 35"><path d="M15 22.5 H8 A5.2 5.2 0 0 1 7.5 12.2 A5 5 0 0 1 14.5 8.8 A8 8 0 0 1 30.5 11.5 A5.5 5.5 0 0 1 29 22.5 H21" fill="none" stroke="#000" stroke-width="2.3"/><path d="M16 13.5 H20 V26.6 H23 L18 33 L13 26.6 H16Z" fill="#fff" stroke="#000" stroke-width="1.7" stroke-linejoin="miter"/></svg>
<div class="lbl" style="left:757.5px;top:58px;width:100px;color:#1c1c1c;font-size:11px">Cập nhật</div>
<div class="a" style="left:838px;top:18px;width:1px;height:55px;background:#a0a0a0"></div>
<div class="a" style="left:846px;top:18px;width:1px;height:55px;background:#a0a0a0"></div>
<div class="cb" style="left:844px;top:39px;width:13px;height:13px"></div>
<div class="t" style="left:859px;top:41px;font-size:11px;color:#1c1c1c">2 tấm</div>
<div class="a" style="left:449px;top:76px;width:66px;height:21px;background:#f7f7f7;border-top:2px solid #8c8c8c;border-left:2px solid #8c8c8c;border-right:1px solid #e0e0e0;border-bottom:1px solid #fff"></div>
<div class="t" style="left:456px;top:82px;font-size:11px;color:#1c1c1c">Đồ họa: 1D</div>
<div class="a" style="left:520px;top:76px;width:1px;height:22px;background:#b0b0b0"></div>
<div class="t" style="left:531px;top:81px;font-size:11px;color:#1c1c1c">Thống kê: 1D</div>
<div class="a" style="left:606px;top:76px;width:1px;height:22px;background:#b0b0b0"></div>
<div class="a" style="left:451px;top:103px;width:887px;height:1px;background:#fafafa"></div>
<div class="cb" style="left:452px;top:108px;width:13px;height:13px"><svg class="ck" width="11" height="11" viewBox="0 0 11 11"><path d="M0.8 5.2 L3.8 8.2 L9.8 2.2" fill="none" stroke="#383838" stroke-width="1.5"/></svg></div>
<div class="t" style="left:467px;top:110px;font-size:10.5px;color:#1c1c1c">Kích thước mảnh</div>
<div class="cb" style="left:561px;top:108px;width:13px;height:13px"><svg class="ck" width="11" height="11" viewBox="0 0 11 11"><path d="M0.8 5.2 L3.8 8.2 L9.8 2.2" fill="none" stroke="#383838" stroke-width="1.5"/></svg></div>
<div class="t" style="left:577px;top:110px;font-size:10.5px;color:#1c1c1c">Nhãn</div>
<div class="cb" style="left:616px;top:108px;width:13px;height:13px"><svg class="ck" width="11" height="11" viewBox="0 0 11 11"><path d="M0.8 5.2 L3.8 8.2 L9.8 2.2" fill="none" stroke="#383838" stroke-width="1.5"/></svg></div>
<div class="t" style="left:631px;top:110px;font-size:10.5px;color:#1c1c1c">Kích thước phế liệu</div>
<div class="a" style="left:737px;top:105px;width:73px;height:20px;background:#e1e1e1;border:1px solid #adadad"></div>
<div class="t" style="left:744px;top:110px;font-size:11px;color:#1c1c1c">Additional...</div>
<div class="a" style="left:451px;top:126px;width:887px;height:1px;background:#a0a0a0"></div>
<div class="a" style="left:451px;top:126px;width:1px;height:546px;background:#a0a0a0"></div>
<div class="a" style="left:454px;top:130px;width:874px;height:33px;background:#c1ddf8"></div>
<div class="a" style="left:505px;top:130px;width:1px;height:34px;background:#000"></div>
<div class="a" style="left:506px;top:130px;width:1px;height:33px;background:#fff"></div>
<div class="a" style="left:575px;top:130px;width:1px;height:34px;background:#000"></div>
<div class="a" style="left:576px;top:130px;width:1px;height:33px;background:#fff"></div>
<div class="a" style="left:649px;top:130px;width:1px;height:34px;background:#000"></div>
<div class="a" style="left:650px;top:130px;width:1px;height:33px;background:#fff"></div>
<div class="a" style="left:690px;top:130px;width:1px;height:34px;background:#000"></div>
<div class="a" style="left:691px;top:130px;width:1px;height:33px;background:#fff"></div>
<div class="a" style="left:761px;top:130px;width:1px;height:34px;background:#000"></div>
<div class="a" style="left:762px;top:130px;width:1px;height:33px;background:#fff"></div>
<div class="a" style="left:1328px;top:130px;width:1px;height:34px;background:#000"></div>
<div class="a" style="left:454px;top:163px;width:875px;height:1px;background:#000"></div>
<div class="g" style="left:455px;top:131px;">Chiều</div>
<div class="g" style="left:455px;top:148px;">dài</div>
<div class="g" style="left:508px;top:131px;">Vật liệu</div>
<div class="g" style="left:578px;top:131px;">Số lượng</div>
<div class="g" style="left:652px;top:131px;">Nhãn</div>
<div class="g" style="left:693px;top:131px;">Phế liệu</div>
<div class="g" style="left:764px;top:131px;">Đồ họa: 1D</div>
<svg class="a" style="left:493px;top:133px" width="9" height="8" viewBox="0 0 9 8"><path d="M4.5 0.5 L8.5 7.5 L0.5 7.5Z" fill="#8b0b0b"/></svg>
<div class="a" style="left:454px;top:216px;width:874px;height:1px;background:#d3d3d3"></div>
<div class="a" style="left:454px;top:164px;width:51px;height:52px;background:#b9cde5"></div>
<div class="g" style="left:455px;top:166px;">5800</div>
<div class="g" style="left:508px;top:166px;">C3328</div>
<div class="gr" style="left:575px;top:166px;width:70px">20</div>
<div class="g" style="left:693px;top:166px;">395</div>
<div class="a" style="left:767px;top:169px;width:556px;height:23px;border:1.5px solid #000;background:#fff"></div>
<div class="b" style="left:767.0px;top:173px;width:213.1px">2220</div>
<div class="b" style="left:767.0px;top:196px;width:213.1px">KD</div>
<div class="a" style="left:980px;top:169px;width:1.5px;height:23px;background:#000"></div>
<div class="b" style="left:980.1px;top:173px;width:213.1px">2220</div>
<div class="b" style="left:980.1px;top:196px;width:213.1px">KD</div>
<div class="a" style="left:1193px;top:169px;width:1.5px;height:23px;background:#000"></div>
<div class="b" style="left:1193.2px;top:173px;width:91.4px">950</div>
<div class="b" style="left:1193.2px;top:196px;width:91.4px">KN</div>
<div class="a" style="left:1285px;top:169px;width:38px;height:23px;border:1.5px solid #000;background:#808080"></div>
<div class="b" style="left:1284.6px;top:173px;width:38.4px">395</div>
<div class="a" style="left:454px;top:269px;width:874px;height:1px;background:#d3d3d3"></div>
<div class="g" style="left:455px;top:219px;">5800</div>
<div class="g" style="left:508px;top:219px;">C3303</div>
<div class="gr" style="left:575px;top:219px;width:70px">9</div>
<div class="g" style="left:693px;top:219px;">132</div>
<div class="a" style="left:767px;top:222px;width:556px;height:23px;border:1.5px solid #000;background:#fff"></div>
<div class="b" style="left:767.0px;top:226px;width:208.4px">2171</div>
<div class="b" style="left:767.0px;top:249px;width:208.4px">CD</div>
<div class="a" style="left:975px;top:222px;width:1.5px;height:23px;background:#000"></div>
<div class="b" style="left:975.4px;top:226px;width:83.5px">868</div>
<div class="b" style="left:975.4px;top:249px;width:83.5px">CN</div>
<div class="a" style="left:1059px;top:222px;width:1.5px;height:23px;background:#000"></div>
<div class="b" style="left:1058.9px;top:226px;width:83.5px">868</div>
<div class="b" style="left:1058.9px;top:249px;width:83.5px">CN</div>
<div class="a" style="left:1142px;top:222px;width:1.5px;height:23px;background:#000"></div>
<div class="b" style="left:1142.4px;top:226px;width:83.5px">868</div>
<div class="b" style="left:1142.4px;top:249px;width:83.5px">CN</div>
<div class="a" style="left:1226px;top:222px;width:1.5px;height:23px;background:#000"></div>
<div class="b" style="left:1225.9px;top:226px;width:83.5px">868</div>
<div class="b" style="left:1225.9px;top:249px;width:83.5px">CN</div>
<div class="a" style="left:1309px;top:222px;width:14px;height:23px;border:1.5px solid #000;background:#808080"></div>
<div class="a" style="left:1303px;top:224px;width:25px;height:19px;background:#808080"></div>
<div class="b" style="left:1303px;top:226px;width:25px">132</div>
<div class="a" style="left:454px;top:322px;width:874px;height:1px;background:#d3d3d3"></div>
<div class="g" style="left:455px;top:272px;">5800</div>
<div class="g" style="left:508px;top:272px;">C3303</div>
<div class="gr" style="left:575px;top:272px;width:70px">24</div>
<div class="g" style="left:693px;top:272px;">575</div>
<div class="a" style="left:767px;top:275px;width:556px;height:23px;border:1.5px solid #000;background:#fff"></div>
<div class="b" style="left:767.0px;top:279px;width:208.4px">2171</div>
<div class="b" style="left:767.0px;top:302px;width:208.4px">CD</div>
<div class="a" style="left:975px;top:275px;width:1.5px;height:23px;background:#000"></div>
<div class="b" style="left:975.4px;top:279px;width:208.4px">2171</div>
<div class="b" style="left:975.4px;top:302px;width:208.4px">CD</div>
<div class="a" style="left:1184px;top:275px;width:1.5px;height:23px;background:#000"></div>
<div class="b" style="left:1183.8px;top:279px;width:83.5px">868</div>
<div class="b" style="left:1183.8px;top:302px;width:83.5px">CN</div>
<div class="a" style="left:1267px;top:275px;width:56px;height:23px;border:1.5px solid #000;background:#808080"></div>
<div class="b" style="left:1267.3px;top:279px;width:55.7px">575</div>
<div class="a" style="left:454px;top:375px;width:874px;height:1px;background:#d3d3d3"></div>
<div class="g" style="left:455px;top:325px;">5800</div>
<div class="g" style="left:508px;top:325px;">C3303</div>
<div class="gr" style="left:575px;top:325px;width:70px">1</div>
<div class="g" style="left:693px;top:325px;">1448</div>
<div class="a" style="left:767px;top:328px;width:556px;height:23px;border:1.5px solid #000;background:#fff"></div>
<div class="b" style="left:767.0px;top:332px;width:208.4px">2171</div>
<div class="b" style="left:767.0px;top:355px;width:208.4px">CD</div>
<div class="a" style="left:975px;top:328px;width:1.5px;height:23px;background:#000"></div>
<div class="b" style="left:975.4px;top:332px;width:208.4px">2171</div>
<div class="b" style="left:975.4px;top:355px;width:208.4px">CD</div>
<div class="a" style="left:1184px;top:328px;width:139px;height:23px;border:1.5px solid #000;background:#808080"></div>
<div class="b" style="left:1183.8px;top:332px;width:139.2px">1448</div>
<div class="a" style="left:454px;top:428px;width:874px;height:1px;background:#d3d3d3"></div>
<div class="g" style="left:455px;top:378px;">5800</div>
<div class="g" style="left:508px;top:378px;">C3303</div>
<div class="gr" style="left:575px;top:378px;width:70px">1</div>
<div class="g" style="left:693px;top:378px;">3624</div>
<div class="a" style="left:767px;top:381px;width:556px;height:23px;border:1.5px solid #000;background:#fff"></div>
<div class="b" style="left:767.0px;top:385px;width:208.4px">2171</div>
<div class="b" style="left:767.0px;top:408px;width:208.4px">CD</div>
<div class="a" style="left:975px;top:381px;width:348px;height:23px;border:1.5px solid #000;background:#808080"></div>
<div class="b" style="left:975.4px;top:385px;width:347.6px">3624</div>
<div class="a" style="left:454px;top:481px;width:874px;height:1px;background:#d3d3d3"></div>
<div class="g" style="left:455px;top:431px;">5800</div>
<div class="g" style="left:508px;top:431px;">C3295</div>
<div class="gr" style="left:575px;top:431px;width:70px">30</div>
<div class="g" style="left:693px;top:431px;">486</div>
<div class="a" style="left:767px;top:434px;width:556px;height:23px;border:1.5px solid #000;background:#fff"></div>
<div class="b" style="left:767.0px;top:438px;width:191.5px">1995</div>
<div class="b" style="left:767.0px;top:461px;width:191.5px">ND</div>
<div class="a" style="left:959px;top:434px;width:1.5px;height:23px;background:#000"></div>
<div class="b" style="left:958.5px;top:438px;width:191.5px">1995</div>
<div class="b" style="left:958.5px;top:461px;width:191.5px">ND</div>
<div class="a" style="left:1150px;top:434px;width:1.5px;height:23px;background:#000"></div>
<div class="b" style="left:1150.1px;top:438px;width:62.8px">652</div>
<div class="b" style="left:1150.1px;top:461px;width:62.8px">NN</div>
<div class="a" style="left:1213px;top:434px;width:1.5px;height:23px;background:#000"></div>
<div class="b" style="left:1212.9px;top:438px;width:62.8px">652</div>
<div class="b" style="left:1212.9px;top:461px;width:62.8px">NN</div>
<div class="a" style="left:1276px;top:434px;width:47px;height:23px;border:1.5px solid #000;background:#808080"></div>
<div class="b" style="left:1275.6px;top:438px;width:47.4px">486</div>
<div class="a" style="left:505px;top:164px;width:1px;height:317px;background:#d3d3d3"></div>
<div class="a" style="left:575px;top:164px;width:1px;height:317px;background:#d3d3d3"></div>
<div class="a" style="left:649px;top:164px;width:1px;height:317px;background:#d3d3d3"></div>
<div class="a" style="left:690px;top:164px;width:1px;height:317px;background:#d3d3d3"></div>
<div class="a" style="left:761px;top:164px;width:1px;height:317px;background:#d3d3d3"></div>
<div class="a" style="left:1328px;top:164px;width:1px;height:317px;background:#d3d3d3"></div>
<div class="a" style="left:453px;top:162px;width:54px;height:56px;border:3px solid #000;border-left-width:1px"></div>
</body></html>
